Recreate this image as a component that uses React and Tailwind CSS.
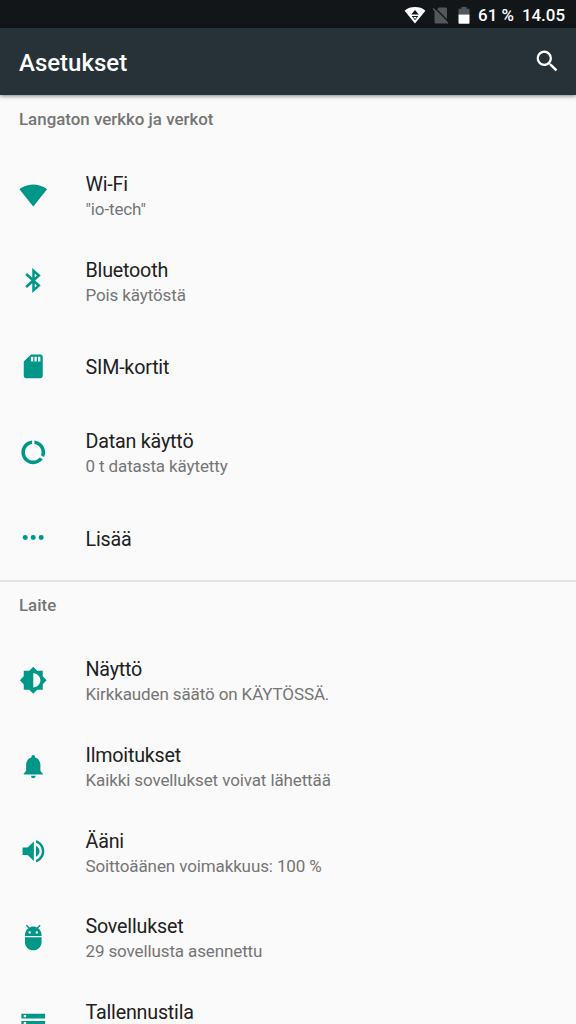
import {
  MdAdb,
  MdBrightness6,
  MdDataUsage,
  MdNotifications,
  MdSdStorage,
  MdSearch,
  MdStorage,
} from 'react-icons/md';

function WifiIcon({ className }) {
  return (
    <svg viewBox="0 0 24 24" fill="currentColor" className={className}>
      <path d="M12.01 21.49L23.64 7c-.45-.34-4.93-4-11.64-4C5.28 3 .81 6.66.36 7l11.63 14.49.01.01.01-.01z" />
    </svg>
  );
}

function BluetoothIcon({ className }) {
  return (
    <svg viewBox="0 0 24 24" fill="none" stroke="currentColor" strokeWidth="2.1" className={className}>
      <path d="M6 6.700l10.700 9.800L12.200 20.500V4l4.500 4L6 17.700" />
    </svg>
  );
}

function VolumeIcon({ className }) {
  return (
    <svg viewBox="0 0 24 24" fill="currentColor" className={className}>
      <path d="M3 8.800v6.400h4.300l5.200 5V3.800l-5.200 5H3zM17.300 12c0-2-1.200-3.800-3-4.600v9.200c1.800-.8 3-2.600 3-4.600z" />
      <path d="M14.300 2.700v2.200c2.900.86 4.900 3.800 4.900 7.100s-2 6.240-4.900 7.100v2.200c4-.91 7-4.900 7-9.300s-3-8.390-7-9.300z" />
    </svg>
  );
}

function MoreIcon({ className }) {
  return (
    <svg viewBox="0 0 24 24" fill="currentColor" className={className}>
      <circle cx="5.3" cy="12.3" r="2.1" />
      <circle cx="12" cy="12.3" r="2.1" />
      <circle cx="18.7" cy="12.3" r="2.1" />
    </svg>
  );
}

const SECTIONS = [
  {
    title: 'Langaton verkko ja verkot',
    items: [
      { icon: WifiIcon, label: 'Wi-Fi', summary: '"io-tech"' },
      { icon: BluetoothIcon, label: 'Bluetooth', summary: 'Pois käytöstä' },
      { icon: MdSdStorage, label: 'SIM-kortit' },
      { icon: MdDataUsage, label: 'Datan käyttö', summary: '0 t datasta käytetty' },
      { icon: MoreIcon, label: 'Lisää' },
    ],
  },
  {
    title: 'Laite',
    items: [
      { icon: MdBrightness6, label: 'Näyttö', summary: 'Kirkkauden säätö on KÄYTÖSSÄ.' },
      { icon: MdNotifications, label: 'Ilmoitukset', summary: 'Kaikki sovellukset voivat lähettää' },
      { icon: VolumeIcon, label: 'Ääni', summary: 'Soittoäänen voimakkuus: 100 %' },
      { icon: MdAdb, label: 'Sovellukset', summary: '29 sovellusta asennettu' },
      { icon: MdStorage, label: 'Tallennustila', summary: '\u00a0' },
    ],
  },
];

function StatusBar() {
  return (
    <div className="flex h-7 shrink-0 items-center justify-end bg-[#121619] pt-[3px] pr-[11px] text-[16.9px] font-medium text-white">
      {/* Wi-Fi, jossa siirtonuolet */}
      <svg viewBox="0 0 22 18" className="mr-[6px] h-[18px] w-[22px]">
        <path d="M11 16.600L.6 3.700C3.500 1.200 7 .1 11 .1s7.500 1.100 10.400 3.600z" fill="#fff" />
        <path d="M11 3l3.800 4.600H7.200zM7.700 9h6.600L11 13.300z" fill="#121619" />
        <path d="M9.300 10h3.400L11 12z" fill="#fff" />
      </svg>
      {/* Ei SIM-korttia */}
      <svg viewBox="0 0 18 18" className="mr-[8px] h-[18px] w-[18px]">
        <path d="M7 .5h6.500A1.500 1.500 0 0 1 15 2v13.500a1 1 0 0 1-1 1H4A1.500 1.500 0 0 1 2.500 15V4.500z" fill="#54575a" />
        <path d="M2.200 .3l15 15" stroke="#121619" strokeWidth="1.500" />
        <path d="M1 1.500l15 15" stroke="#54575a" strokeWidth="1.500" />
      </svg>
      <svg viewBox="0 0 12 18" className="mr-[8px] h-[18px] w-3">
        <path d="M3.500 0h5v1.700h2.300c.4 0 .7.3.7.7V7.500H.5V2.400c0-.4.3-.7.7-.7h2.300z" fill="#54575a" />
        <path d="M.5 7.500h11v8.600c0 .4-.3.7-.7.7H1.200c-.4 0-.7-.3-.7-.7z" fill="#fff" />
      </svg>
      <span>61 %</span>
      <span className="ml-2">14.05</span>
    </div>
  );
}

function SettingRow({ icon: Icon, label, summary }) {
  return (
    <div className="flex h-[85.7px] shrink-0 items-center pl-[19px]">
      <Icon className="mr-[38px] h-[28.5px] w-[28.5px] shrink-0 text-[#009688]" />
      <div className="pt-[3px]">
        <p className="text-[19.7px] leading-[25px] tracking-[-0.2px] text-[#212121]">{label}</p>
        {summary && <p className="text-[17px] leading-6 tracking-[-0.12px] text-[#757575]">{summary}</p>}
      </div>
    </div>
  );
}

export default function App() {
  return (
    <div className="flex h-screen flex-col overflow-hidden bg-[#fafafa] font-['Roboto',sans-serif]">
      <StatusBar />
      <header className="z-10 flex h-[67px] shrink-0 items-center justify-between bg-[#263238] pr-[15px] pl-[19px] text-white shadow-[0_1px_4px_rgba(0,0,0,0.5)]">
        <h1 className="pt-0.5 text-[24px] font-medium">Asetukset</h1>
        <MdSearch className="h-[28.5px] w-[28.5px]" />
      </header>
      <main className="flex min-h-0 flex-1 flex-col overflow-hidden">
        {SECTIONS.map((section, i) => (
          <section key={section.title} className="shrink-0">
            <h2
              className={`flex h-[57px] items-center pl-[19px] text-[16.9px] font-medium text-[#757575] ${
                i > 0 ? 'border-t-2 border-[#e2e2e2] pb-[9px]' : 'pb-[7px]'
              }`}
            >
              {section.title}
            </h2>
            {section.items.map((item) => (
              <SettingRow key={item.label} {...item} />
            ))}
          </section>
        ))}
      </main>
    </div>
  );
}
